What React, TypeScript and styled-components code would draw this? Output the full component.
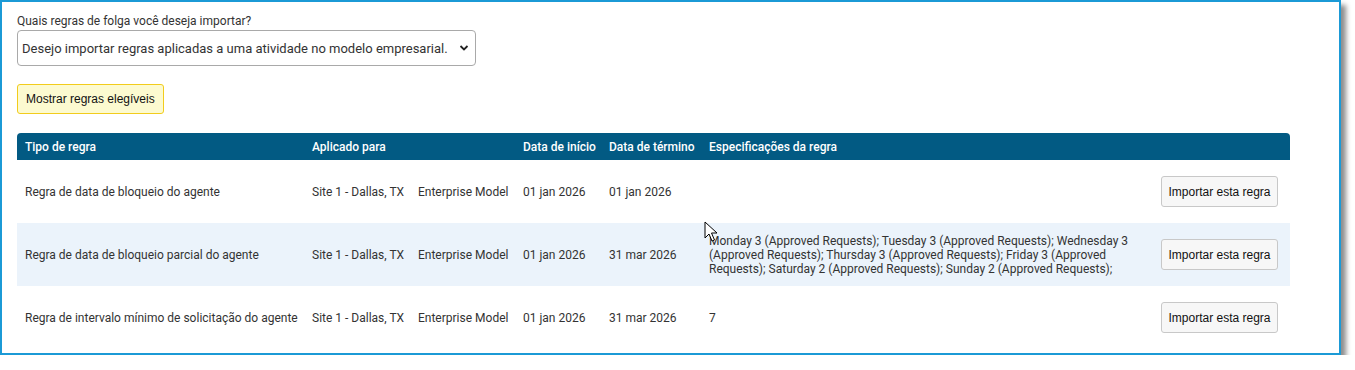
import React from "react";
import styled, { createGlobalStyle } from "styled-components";

const Global = createGlobalStyle`
  html, body { margin: 0; padding: 0; background: #fff; }
  body { font-family: Roboto, "Liberation Sans", Arial, sans-serif; }
`;

const Frame = styled.div`
  position: relative;
  box-sizing: border-box;
  width: 1341px;
  height: 355px;
  border: 2px solid #1b9ad6;
  background: #fff;
  box-shadow: 5px 5px 5px rgba(0, 0, 0, 0.45);
  padding: 11px 0 0 15px;
`;

const Label = styled.div`
  font-family: Roboto, sans-serif;
  font-size: 12px;
  color: #333;
  line-height: 16px;
  margin-bottom: 1px;
`;

const SelectBox = styled.div`
  box-sizing: border-box;
  width: 459px;
  height: 36px;
  border: 1px solid #a9a9a9;
  border-radius: 4px;
  display: flex;
  align-items: center;
  justify-content: space-between;
  padding: 0 6px 0 4px;
  font-family: Roboto, sans-serif;
  font-size: 13px;
  color: #333;
  background: #fff;
  white-space: nowrap;
  overflow: hidden;
`;

const ShowButton = styled.button`
  box-sizing: border-box;
  margin-top: 18px;
  height: 30px;
  padding: 0 8px;
  background: #fcfad0;
  border: 1px solid #f2cc1c;
  border-radius: 3px;
  font-family: "Liberation Sans", Arial, sans-serif;
  font-size: 12px;
  color: #111;
  display: block;
`;

const Table = styled.div`
  margin-top: 19px;
  width: 1273px;
  display: grid;
  grid-template-columns: 287px 106px 105px 86px 100px 452px 137px;
`;

const HeadCell = styled.div<{ $first?: boolean; $last?: boolean }>`
  background: #025a83;
  color: #fff;
  font-family: Roboto, sans-serif;
  font-size: 12px;
  font-weight: 500;
  height: 27px;
  display: flex;
  align-items: center;
  padding-left: 8px;
  border-top-left-radius: ${(p) => (p.$first ? "4px" : "0")};
  border-top-right-radius: ${(p) => (p.$last ? "4px" : "0")};
`;

const Cell = styled.div<{ $alt?: boolean; $right?: boolean }>`
  background: ${(p) => (p.$alt ? "#ebf3fb" : "#fff")};
  color: #333;
  font-family: Roboto, sans-serif;
  font-size: 12px;
  line-height: 14px;
  height: 63px;
  box-sizing: border-box;
  display: flex;
  align-items: center;
  padding: 0 ${(p) => (p.$right ? "12px" : "0")} 0 8px;
  justify-content: ${(p) => (p.$right ? "flex-end" : "flex-start")};
  white-space: nowrap;
`;

const SpecCell = styled(Cell)`
  white-space: normal;
  padding-right: 18px;
`;

const ImportButton = styled.button`
  box-sizing: border-box;
  height: 31px;
  width: 118px;
  background: #f7f7f7;
  border: 1px solid #c8c8c8;
  border-radius: 3px;
  font-family: "Liberation Sans", Arial, sans-serif;
  font-size: 12px;
  color: #111;
  padding: 0;
`;

const Cursor = styled.svg`
  position: absolute;
  left: 702px;
  top: 219px;
`;

const Chevron = () => (
  <svg width="10" height="8" viewBox="0 0 10 8">
    <path d="M1.5 2 L5 5.5 L8.5 2" fill="none" stroke="#222" strokeWidth="1.8" />
  </svg>
);

type Row = {
  tipo: string;
  site: string;
  model: string;
  inicio: string;
  fim: string;
  spec: string;
};

const rows: Row[] = [
  {
    tipo: "Regra de data de bloqueio do agente",
    site: "Site 1 - Dallas, TX",
    model: "Enterprise Model",
    inicio: "01 jan 2026",
    fim: "01 jan 2026",
    spec: "",
  },
  {
    tipo: "Regra de data de bloqueio parcial do agente",
    site: "Site 1 - Dallas, TX",
    model: "Enterprise Model",
    inicio: "01 jan 2026",
    fim: "31 mar 2026",
    spec:
      "Monday 3 (Approved Requests); Tuesday 3 (Approved Requests); Wednesday 3 (Approved Requests); Thursday 3 (Approved Requests); Friday 3 (Approved Requests); Saturday 2 (Approved Requests); Sunday 2 (Approved Requests);",
  },
  {
    tipo: "Regra de intervalo mínimo de solicitação do agente",
    site: "Site 1 - Dallas, TX",
    model: "Enterprise Model",
    inicio: "01 jan 2026",
    fim: "31 mar 2026",
    spec: "7",
  },
];

export default function App() {
  return (
    <>
      <Global />
      <Frame>
        <Label>Quais regras de folga você deseja importar?</Label>
        <SelectBox>
          <span>Desejo importar regras aplicadas a uma atividade no modelo empresarial.</span>
          <Chevron />
        </SelectBox>
        <ShowButton>Mostrar regras elegíveis</ShowButton>
        <Table>
          <HeadCell $first>Tipo de regra</HeadCell>
          <HeadCell>Aplicado para</HeadCell>
          <HeadCell></HeadCell>
          <HeadCell>Data de início</HeadCell>
          <HeadCell>Data de término</HeadCell>
          <HeadCell>Especificações da regra</HeadCell>
          <HeadCell $last></HeadCell>
          {rows.map((r, i) => {
            const alt = i === 1;
            return (
              <React.Fragment key={i}>
                <Cell $alt={alt}>{r.tipo}</Cell>
                <Cell $alt={alt}>{r.site}</Cell>
                <Cell $alt={alt}>{r.model}</Cell>
                <Cell $alt={alt}>{r.inicio}</Cell>
                <Cell $alt={alt}>{r.fim}</Cell>
                <SpecCell $alt={alt}>{r.spec}</SpecCell>
                <Cell $alt={alt} $right>
                  <ImportButton>Importar esta regra</ImportButton>
                </Cell>
              </React.Fragment>
            );
          })}
        </Table>
        <Cursor width="14" height="22" viewBox="0 0 14 22">
          <path d="M1 1 L1 17 L5 13 L8 20 L10.5 19 L7.5 12 L13 12 Z" fill="#fff" stroke="#000" strokeWidth="1" strokeLinejoin="round" />
        </Cursor>
      </Frame>
    </>
  );
}
